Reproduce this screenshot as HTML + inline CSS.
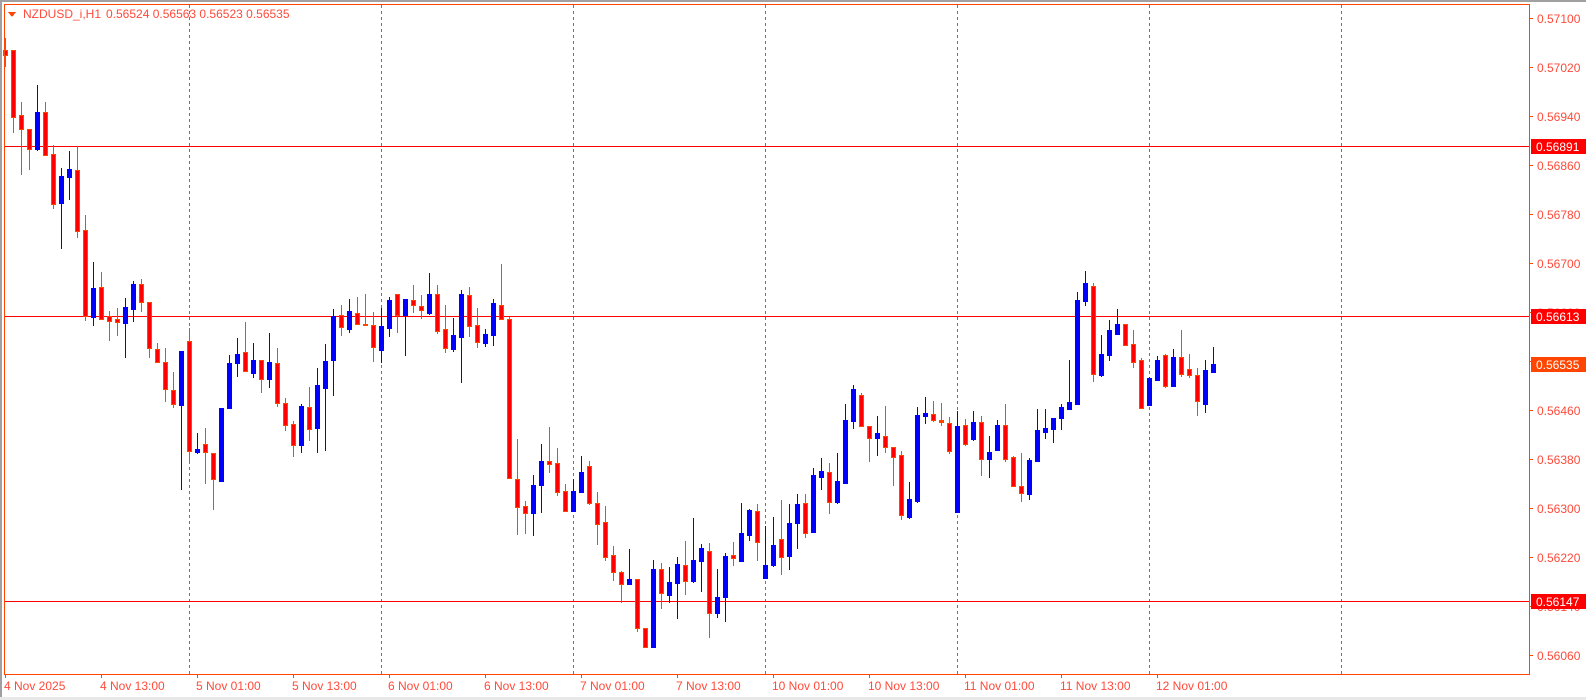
<!DOCTYPE html>
<html><head><meta charset="utf-8"><style>
html,body{margin:0;padding:0;background:#fff;width:1586px;height:700px;overflow:hidden}
svg{position:absolute;left:0;top:0}
text{font-family:"Liberation Sans",sans-serif;font-size:12px;fill:#ff4a3a}
</style></head><body>
<svg id="s" width="1586" height="700" xmlns="http://www.w3.org/2000/svg" shape-rendering="crispEdges">
<rect x="0" y="0" width="1586" height="2" fill="#a0a0a0"/>
<rect x="0" y="0" width="2" height="700" fill="#a0a0a0"/>
<rect x="0" y="697" width="1586" height="3" fill="#e8e8e8"/>
<g stroke="#ff4500" stroke-width="1" stroke-dasharray="3,3">
<line x1="189.5" y1="5" x2="189.5" y2="674"/>
<line x1="381.5" y1="5" x2="381.5" y2="674"/>
<line x1="573.5" y1="5" x2="573.5" y2="674"/>
<line x1="765.5" y1="5" x2="765.5" y2="674"/>
<line x1="957.5" y1="5" x2="957.5" y2="674"/>
<line x1="1149.5" y1="5" x2="1149.5" y2="674"/>
<line x1="1341.5" y1="5" x2="1341.5" y2="674"/>
</g>
<g stroke="#ff0000" stroke-width="1">
<line x1="4" y1="146.5" x2="1529" y2="146.5"/>
<line x1="4" y1="316.5" x2="1529" y2="316.5"/>
<line x1="4" y1="601.5" x2="1529" y2="601.5"/>
</g>
<g id="c"></g>
<rect x="4.5" y="4.5" width="1525" height="670" fill="none" stroke="#ff4500"/>
<g stroke="#ff4500">
<line x1="1529" y1="18.5" x2="1533" y2="18.5"/><line x1="1529" y1="67.5" x2="1533" y2="67.5"/>
<line x1="1529" y1="116.5" x2="1533" y2="116.5"/><line x1="1529" y1="165.5" x2="1533" y2="165.5"/>
<line x1="1529" y1="214.5" x2="1533" y2="214.5"/><line x1="1529" y1="263.5" x2="1533" y2="263.5"/>
<line x1="1529" y1="312.5" x2="1533" y2="312.5"/><line x1="1529" y1="361.5" x2="1533" y2="361.5"/>
<line x1="1529" y1="410.5" x2="1533" y2="410.5"/><line x1="1529" y1="459.5" x2="1533" y2="459.5"/>
<line x1="1529" y1="508.5" x2="1533" y2="508.5"/><line x1="1529" y1="557.5" x2="1533" y2="557.5"/>
<line x1="1529" y1="606.5" x2="1533" y2="606.5"/><line x1="1529" y1="655.5" x2="1533" y2="655.5"/>
</g>
<g>
<text x="1537" y="23">0.57100</text><text x="1537" y="72">0.57020</text>
<text x="1537" y="121">0.56940</text><text x="1537" y="170">0.56860</text>
<text x="1537" y="219">0.56780</text><text x="1537" y="268">0.56700</text>
<text x="1537" y="317">0.56620</text><text x="1537" y="366">0.56540</text>
<text x="1537" y="415">0.56460</text><text x="1537" y="464">0.56380</text>
<text x="1537" y="513">0.56300</text><text x="1537" y="562">0.56220</text>
<text x="1537" y="611">0.56140</text><text x="1537" y="660">0.56060</text>
</g>
<rect x="1531" y="139" width="55" height="15" fill="#ff0000"/><text x="1536" y="151" style="fill:#fff">0.56891</text>
<rect x="1531" y="309" width="55" height="15" fill="#ff0000"/><text x="1536" y="321" style="fill:#fff">0.56613</text>
<rect x="1531" y="357" width="55" height="15" fill="#ff4500"/><text x="1536" y="369" style="fill:#fff">0.56535</text>
<rect x="1531" y="594" width="55" height="15" fill="#ff0000"/><text x="1536" y="606" style="fill:#fff">0.56147</text>
<g id="t" stroke="#ff4500"></g>
<text x="4" y="690">4 Nov 2025</text><text x="100" y="690">4 Nov 13:00</text>
<text x="196" y="690">5 Nov 01:00</text><text x="292" y="690">5 Nov 13:00</text>
<text x="388" y="690">6 Nov 01:00</text><text x="484" y="690">6 Nov 13:00</text>
<text x="580" y="690">7 Nov 01:00</text><text x="676" y="690">7 Nov 13:00</text>
<text x="772" y="690">10 Nov 01:00</text><text x="868" y="690">10 Nov 13:00</text>
<text x="964" y="690">11 Nov 01:00</text><text x="1060" y="690">11 Nov 13:00</text>
<text x="1156" y="690">12 Nov 01:00</text>
<polygon points="8,12 16,12 12,17" fill="#ff4500"/>
<text x="23" y="18">NZDUSD_i,H1</text>
<text x="106" y="18">0.56524 0.56563 0.56523 0.56535</text>
</svg>
<script>
var d=[
"r50,55,38,67","r50,117,50,133","r115,129,102,175","r129,149,129,170","b112,149,85,151","r112,155,102,155","r154,204,145,209","b176,203,168,249","b169,177,151,200","r170,231,146,238",
"r230,316,215,321","b288,317,262,326","r287,319,272,319","r316,321,311,341","r319,322,308,336","b307,323,298,358","b284,309,281,322","r284,302,279,312","r302,348,302,358","r349,362,343,363",
"r362,389,348,402","r390,404,372,408","b351,405,351,490","r341,451,328,463","b449,452,433,454","r444,452,428,484","r453,479,453,510","b408,481,408,481","b363,408,355,408","b354,363,338,377",
"r352,371,322,371","b360,373,343,378","r360,379,360,393","b362,379,333,388","r363,403,348,407","r403,425,398,431","r424,445,421,457","b406,445,404,453","r407,429,387,441","b385,428,368,453",
"b361,388,344,451","b316,360,309,396","r315,327,305,336","b311,329,299,333","r313,324,297,325","r324,325,294,325","r325,347,312,362","b326,350,308,363","b300,328,297,337","r294,315,294,333",
"b299,315,299,356","r300,305,285,313","r306,310,295,319","b294,313,273,315","r294,331,285,334","r329,348,305,353","b335,349,318,352","b294,337,290,383","r295,326,287,337","r325,342,308,348",
"b334,343,329,347","b303,335,299,346","r305,319,264,319","r319,478,317,478","r479,507,439,535","r506,513,501,534","b485,513,475,536","b461,485,444,513","r461,464,427,473","r463,492,448,496",
"r491,511,484,511","b491,511,479,511","b472,492,456,492","r466,503,461,505","r503,524,492,545","r522,557,506,561","r555,572,546,581","r572,584,571,603","b579,584,549,584","r579,628,579,632",
"r628,647,628,648","b569,647,560,647","r569,593,563,609","b582,595,567,603","b564,583,557,619","r565,581,541,595","b560,581,518,583","b548,561,544,592","r551,613,543,638","b597,613,569,618",
"b556,597,553,622","r555,558,542,566","b533,561,503,562","b510,535,509,541","r511,542,504,561","b565,578,526,578","b545,565,517,567","r539,557,500,575","b523,556,504,570","b504,523,494,549",
"r503,533,494,538","b475,532,468,533","b471,477,458,490","r472,502,463,514","b481,502,453,504","b420,483,404,483","b389,421,385,429","r395,426,393,427","r426,438,426,462","b433,438,416,456",
"r436,447,406,453","r447,457,447,486","r455,515,451,520","b499,517,482,519","b415,501,407,503","b413,416,397,424","r414,420,401,422","r420,422,403,426","r423,451,417,454","b426,512,411,512",
"r425,444,419,446","b422,439,411,441","r422,459,416,476","b452,459,436,478","b425,450,420,450","r425,459,404,462","r457,486,456,487","r486,493,453,502","b460,494,458,500","b430,461,409,462",
"b428,432,409,439","b418,429,418,443","b407,418,404,430","b402,409,360,410","b300,404,292,405","b283,301,271,306","r286,374,283,382","b354,375,335,377","b330,355,320,361","b324,334,309,335",
"r324,345,324,346","r344,362,330,368","r360,408,358,408","b378,405,377,405","b360,380,356,380","r355,386,354,388","b357,386,349,386","r357,374,330,377","r369,375,354,378","r375,401,368,416",
"b370,404,360,413","b364,372,347,372"];
var h="";
for(var i=0;i<d.length;i++){var s=d[i],col=s[0],v=s.slice(1).split(",").map(Number);var x=5+8*i;
var wc=col=="r"?"#ff4500":"#0000ff";
h+='<rect x="'+x+'" y="'+v[2]+'" width="1" height="'+Math.max(1,v[3]-v[2])+'" fill="'+wc+'"/>';
if(col=="r"){h+='<rect x="'+(x-2)+'" y="'+v[0]+'" width="5" height="'+Math.max(2,v[1]-v[0]+1)+'" fill="#ff4500"/>';
if(v[1]-v[0]>2)h+='<rect x="'+(x-1)+'" y="'+(v[0]+1)+'" width="3" height="'+(v[1]-v[0]-1)+'" fill="#ff0000"/>';}
else h+='<rect x="'+(x-2)+'" y="'+v[0]+'" width="5" height="'+Math.max(2,v[1]-v[0]+1)+'" fill="#0000ff"/>';}
document.getElementById("c").innerHTML=h;
var t="";for(var k=0;k<13;k++){var tx=5+96*k;t+='<line x1="'+(tx+0.5)+'" y1="674" x2="'+(tx+0.5)+'" y2="678"/>';}
document.getElementById("t").innerHTML=t;
</script>
</body></html>
